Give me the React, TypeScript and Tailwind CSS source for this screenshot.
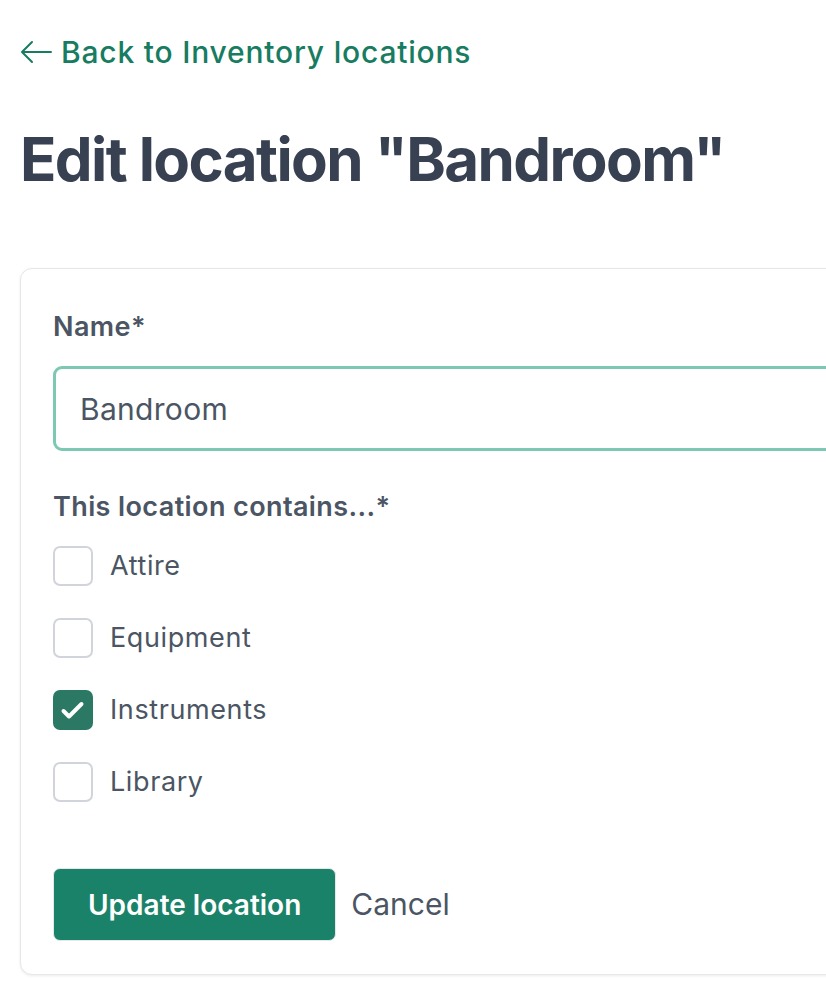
import React, { useState } from 'react';

const categories = ['Attire', 'Equipment', 'Instruments', 'Library'];

function Checkbox({ checked, onChange, label }: { checked: boolean; onChange: () => void; label: string }) {
  return (
    <label className="flex items-center gap-[17px] cursor-pointer">
      <span
        onClick={onChange}
        className={
          checked
            ? 'flex h-[40px] w-[40px] items-center justify-center rounded-[7px] bg-[#2b7864]'
            : 'flex h-[40px] w-[40px] items-center justify-center rounded-[7px] border-2 border-[#d1d5db] bg-white'
        }
      >
        {checked && (
          <svg width="28" height="28" viewBox="0 0 28 28" fill="none">
            <path d="M4.5 15l5.5 5.5L22.5 8" stroke="white" strokeWidth="4" strokeLinecap="round" strokeLinejoin="round" />
          </svg>
        )}
      </span>
      <span className="text-[27px] leading-[36px] tracking-[0.6px] text-[#4b5563]">{label}</span>
    </label>
  );
}

export default function App() {
  const [name, setName] = useState('Bandroom');
  const [selected, setSelected] = useState<string[]>(['Instruments']);

  const toggle = (c: string) =>
    setSelected((s) => (s.includes(c) ? s.filter((x) => x !== c) : [...s, c]));

  return (
    <div className="min-h-screen w-full overflow-hidden bg-white" style={{ fontFamily: 'Inter, "Noto Sans", sans-serif' }}>
      <div className="w-[1100px] pl-[20px] pt-[32px]">
        {/* Back link */}
        <a href="#" className="flex items-center gap-[9px] text-[30px] leading-[40px] font-medium tracking-[0.8px] text-[#177c61]">
          <svg width="32" height="24" viewBox="0 0 32 24" fill="none">
            <path d="M31 12H2M12 2L2 12l10 10" stroke="#177c61" strokeWidth="2" strokeLinecap="round" strokeLinejoin="round" />
          </svg>
          Back to Inventory locations
        </a>

        <h1 className="mt-[51px] text-[60px] leading-[72px] font-bold tracking-[-1.6px] text-[#374151]">
          Edit location "Bandroom"
        </h1>

        {/* Card */}
        <div className="mt-[73px] rounded-[12px] border border-[#e5e7eb] bg-white px-[32px] pt-[40px] pb-[33px] shadow-[0_1px_3px_rgba(0,0,0,0.08)]">
          <label className="block text-[27px] leading-[36px] font-semibold tracking-[0.4px] text-[#4b5563]">Name*</label>
          <input
            value={name}
            onChange={(e) => setName(e.target.value)}
            className="mt-[21px] block h-[85px] w-full rounded-[9px] border-[3px] border-[#7cc8b3] bg-white px-[24px] text-[30px] tracking-[0.3px] text-[#4b5563] outline-none"
          />

          <div className="mt-[38px] text-[27px] leading-[36px] font-semibold tracking-[0.4px] text-[#4b5563]">This location contains...*</div>
          <div className="mt-[21px] flex flex-col gap-[32px]">
            {categories.map((c) => (
              <Checkbox key={c} label={c} checked={selected.includes(c)} onChange={() => toggle(c)} />
            ))}
          </div>

          <div className="mt-[66px] flex items-center gap-[15px]">
            <button className="h-[73px] rounded-[7px] border border-[#e5e7eb] bg-[#1a8269] px-[34px] text-[28px] font-semibold text-white">
              Update location
            </button>
            <a href="#" className="text-[30px] text-[#4b5563]">Cancel</a>
          </div>
        </div>
      </div>
    </div>
  );
}
